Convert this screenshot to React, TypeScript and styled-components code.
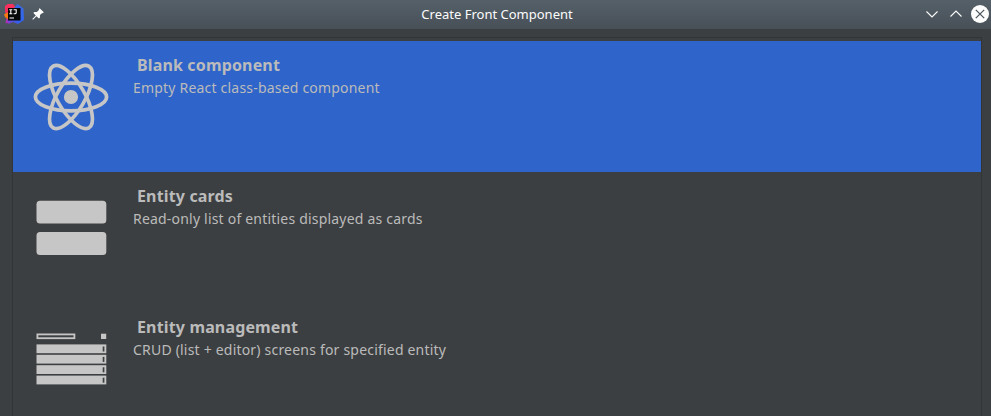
import React from "react";
import styled, { createGlobalStyle } from "styled-components";

const GlobalStyle = createGlobalStyle`
  html, body { margin: 0; height: 100%; overflow: hidden; background: #3c3f41; }
  #root { height: 100%; }
`;

const Dialog = styled.div`
  display: flex;
  flex-direction: column;
  height: 416px;
  overflow: hidden;
  background: #3c3f41;
  font-family: "Noto Sans", sans-serif;
`;

const TitleBar = styled.header`
  display: grid;
  grid-template-columns: 1fr auto 1fr;
  align-items: center;
  flex: none;
  box-sizing: border-box;
  height: 29px;
  padding-bottom: 1px;
  background: linear-gradient(#566069, #475057);
`;

const TitleIcons = styled.div`
  display: flex;
  align-items: center;
  gap: 8px;
  padding-left: 4px;
`;

const Title = styled.h1`
  margin: 0;
  padding-left: 3px;
  color: #fcfcfc;
  font-size: 13px;
  font-weight: 400;
  line-height: 28px;
`;

const WindowButtons = styled.div`
  display: flex;
  justify-content: flex-end;
  gap: 6px;
  padding-right: 2px;
`;

const WindowButton = styled.button`
  display: block;
  width: 18px;
  height: 18px;
  padding: 0;
  border: 0;
  background: none;
  svg { display: block; }
`;

const TemplateList = styled.ul`
  flex: 1;
  margin: 8px 9px 0 12px;
  padding: 3px 0 0;
  border: 1px solid #323435;
  border-bottom: 0;
  list-style: none;
`;

const TemplateRow = styled.li<{ $selected?: boolean }>`
  display: flex;
  height: 131px;
  background: ${(p) => (p.$selected ? "#2f65ca" : "transparent")};
`;

const Thumbnail = styled.div`
  flex: none;
  width: 76px;
  padding: 18px 24px 0 20px;
  svg { display: block; }
`;

const Details = styled.div`
  padding-top: 13px;
  color: #bbbbbb;
`;

const Name = styled.h2`
  margin: 0;
  padding-left: 4px;
  font-size: 16px;
  font-weight: 700;
  line-height: 23px;
  letter-spacing: 0.15px;
`;

const Description = styled.p`
  margin: 0;
  font-size: 14px;
  line-height: 22px;
  letter-spacing: 0.2px;
`;

const AppLogo = () => (
  <svg width="20" height="20" viewBox="0 0 20 20">
    <defs>
      <linearGradient id="logoBlue" x1="0" y1="1" x2="1" y2="0">
        <stop offset="0" stopColor="#8a3ad0" />
        <stop offset=".4" stopColor="#2f62ee" />
        <stop offset="1" stopColor="#3d6ce0" />
      </linearGradient>
      <linearGradient id="logoPink" x1="0" y1="0" x2="0" y2="1">
        <stop offset="0" stopColor="#fe315d" />
        <stop offset=".5" stopColor="#e8305f" />
        <stop offset="1" stopColor="#a92fc5" />
      </linearGradient>
    </defs>
    <path d="M1 2 4 0H9L13 5 6 19.5 1.5 19 3 12 1 8Z" fill="url(#logoPink)" />
    <path d="M10 4 13.5 0 19.5 4.5 20 16 14 20 9 18 5 19.5 3 17Z" fill="url(#logoBlue)" />
    <path d="M0 10.5 3 8.5 5 10V16L1 13Z" fill="#f97a12" />
    <rect x="4" y="4" width="12.5" height="12.5" fill="#080808" />
    <path d="M5.3 5.8h3M6.8 5.8v4M5.3 9.8h3M9.6 5.8h2.6v2.7q0 1.3-1.3 1.3h-1.3M5.5 14h4.5" stroke="#fff" strokeWidth="1.1" fill="none" />
  </svg>
);

const PinIcon = () => (
  <svg width="12" height="12" viewBox="0 0 12 12">
    <path d="M7.7.2 11.8 4.3 10.9 5.2 10.2 4.9 8 7.1 7.9 9.7 6.9 10.6 4.5 8.2 1 11.7.3 11 3.8 7.5 1.4 5.1 2.3 4.1 4.9 4 7.1 1.8 6.8 1.1Z" fill="#fcfcfc" />
  </svg>
);

const ReactIcon = () => (
  <svg width="76" height="76" viewBox="-38 -38 76 76">
    <circle r="7.1" fill="#c6c6c6" />
    <g fill="none" stroke="#c6c6c6" strokeWidth="3.7">
      <ellipse rx="35.6" ry="13.8" />
      <ellipse rx="35.6" ry="13.8" transform="rotate(60)" />
      <ellipse rx="35.6" ry="13.8" transform="rotate(120)" />
    </g>
  </svg>
);

const CardsIcon = () => (
  <svg width="76" height="76" viewBox="0 0 76 76" fill="#c6c6c6">
    <rect x="3.5" y="10.7" width="69.8" height="22.9" rx="3.5" />
    <rect x="3.5" y="42" width="69.8" height="22.9" rx="3.5" />
  </svg>
);

const ManagementIcon = () => (
  <svg width="76" height="76" viewBox="0 0 76 76">
    <rect x="4.4" y="13.4" width="37" height="3.8" fill="none" stroke="#c6c6c6" strokeWidth="1.8" />
    <rect x="68" y="12.7" width="5.2" height="5.3" fill="#c6c6c6" />
    {[23.4, 33.8, 44.2, 54.6].map((y) => (
      <g key={y}>
        <rect x="3.5" y={y} width="69.8" height="8.8" fill="#c6c6c6" />
        <rect x="69.7" y={y + 2.1} width="1.7" height="5" fill="#3c3f41" />
      </g>
    ))}
  </svg>
);

const templates = [
  { name: "Blank component", description: "Empty React class-based component", Icon: ReactIcon },
  { name: "Entity cards", description: "Read-only list of entities displayed as cards", Icon: CardsIcon },
  { name: "Entity management", description: "CRUD (list + editor) screens for specified entity", Icon: ManagementIcon },
];

export default function App() {
  return (
    <>
      <GlobalStyle />
      <Dialog>
        <TitleBar>
          <TitleIcons>
            <AppLogo />
            <PinIcon />
          </TitleIcons>
          <Title>Create Front Component</Title>
          <WindowButtons>
            <WindowButton aria-label="Minimize">
              <svg width="18" height="18" viewBox="0 0 18 18">
                <path d="M3.5 6.5 9 12 14.5 6.5" fill="none" stroke="#fcfcfc" strokeWidth="1.1" />
              </svg>
            </WindowButton>
            <WindowButton aria-label="Maximize">
              <svg width="18" height="18" viewBox="0 0 18 18">
                <path d="M3.5 11.5 9 6 14.5 11.5" fill="none" stroke="#fcfcfc" strokeWidth="1.1" />
              </svg>
            </WindowButton>
            <WindowButton aria-label="Close">
              <svg width="18" height="18" viewBox="0 0 18 18">
                <circle cx="9" cy="9" r="9" fill="#fcfcfc" />
                <path d="M4.8 4.8 13.2 13.2M13.2 4.8 4.8 13.2" stroke="#475057" strokeWidth="1.2" />
              </svg>
            </WindowButton>
          </WindowButtons>
        </TitleBar>
        <TemplateList>
          {templates.map(({ name, description, Icon }, index) => (
            <TemplateRow key={name} $selected={index === 0}>
              <Thumbnail><Icon /></Thumbnail>
              <Details>
                <Name>{name}</Name>
                <Description>{description}</Description>
              </Details>
            </TemplateRow>
          ))}
        </TemplateList>
      </Dialog>
    </>
  );
}
